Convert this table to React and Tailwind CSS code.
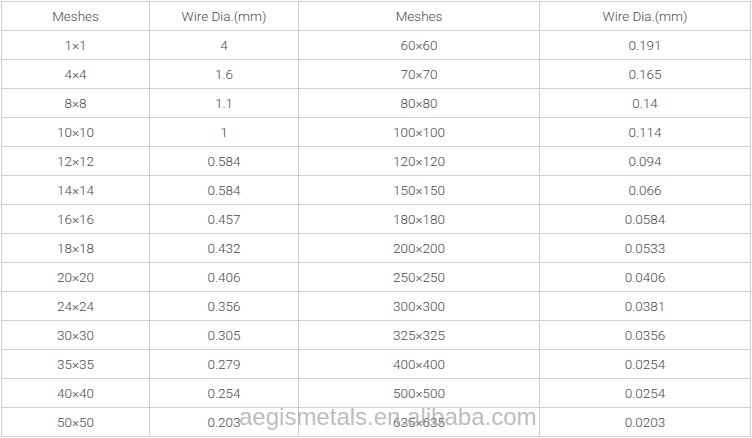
const rows = [
  ['1×1', '4', '60×60', '0.191'],
  ['4×4', '1.6', '70×70', '0.165'],
  ['8×8', '1.1', '80×80', '0.14'],
  ['10×10', '1', '100×100', '0.114'],
  ['12×12', '0.584', '120×120', '0.094'],
  ['14×14', '0.584', '150×150', '0.066'],
  ['16×16', '0.457', '180×180', '0.0584'],
  ['18×18', '0.432', '200×200', '0.0533'],
  ['20×20', '0.406', '250×250', '0.0406'],
  ['24×24', '0.356', '300×300', '0.0381'],
  ['30×30', '0.305', '325×325', '0.0356'],
  ['35×35', '0.279', '400×400', '0.0254'],
  ['40×40', '0.254', '500×500', '0.0254'],
  ['50×50', '0.203', '635×635', '0.0203'],
];

const widths = ['w-[148px]', 'w-[149px]', 'w-[241px]', 'w-[211px]'];

function Cell({ children, i }) {
  return (
    <td
      className={`${widths[i]} h-[29px] border-r border-b border-[#cfcfcf] p-0 text-center align-middle`}
    >
      {children}
    </td>
  );
}

export default function App() {
  return (
    <div
      className="relative h-[438px] w-[752px] bg-white text-[13.5px] font-light text-[#4a4a4a]"
      style={{ fontFamily: 'Roboto, "Liberation Sans", sans-serif' }}
    >
      <table className="ml-px mt-px table-fixed border-separate border-spacing-0 border-l border-t border-[#cfcfcf]">
        <thead>
          <tr>
            <Cell i={0}>Meshes</Cell>
            <Cell i={1}>Wire Dia.(mm)</Cell>
            <Cell i={2}>Meshes</Cell>
            <Cell i={3}>Wire Dia.(mm)</Cell>
          </tr>
        </thead>
        <tbody>
          {rows.map((r, k) => (
            <tr key={k}>
              {r.map((v, i) => (
                <Cell key={i} i={i}>
                  {v}
                </Cell>
              ))}
            </tr>
          ))}
        </tbody>
      </table>

      {/* watermark */}
      <div
        className="pointer-events-none absolute left-[239px] top-[404px] text-[24px] leading-none text-[#a0a0a0]/70"
        style={{ fontFamily: '"Liberation Sans", Arial, sans-serif' }}
      >
        aegismetals.en.alibaba.com
      </div>
    </div>
  );
}
